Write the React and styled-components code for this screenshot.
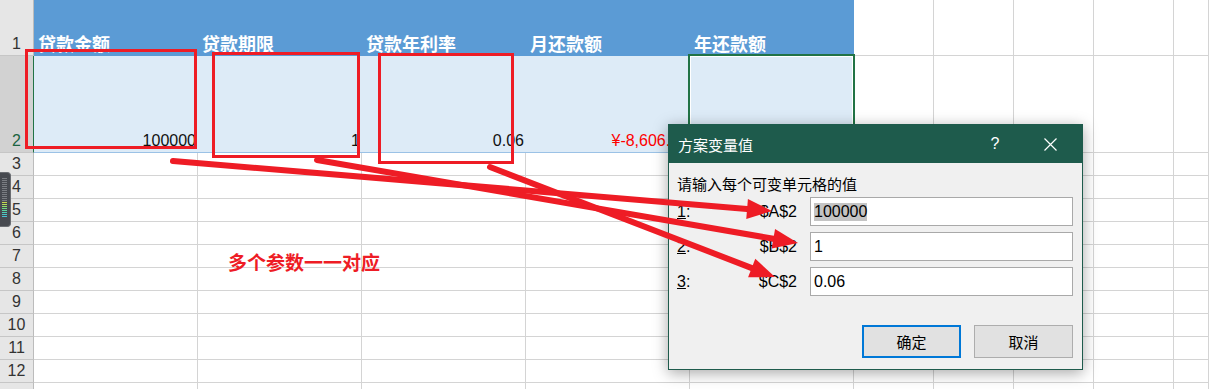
import React from 'react';
import styled, { createGlobalStyle } from 'styled-components';

const GlobalStyle = createGlobalStyle`
  html, body {
    margin: 0;
    padding: 0;
    background: #ffffff;
    overflow: hidden;
  }
`;

const CJK = `"Noto Sans CJK SC", "Noto Sans", sans-serif`;
const LATIN = `"Liberation Sans", "Noto Sans CJK SC", sans-serif`;
const RED = '#ee1c25';

const Page = styled.div`
  position: relative;
  width: 1209px;
  height: 389px;
  overflow: hidden;
  background: #ffffff;
`;

const Sheet = styled.div`
  display: grid;
  grid-template-columns: 34px repeat(5, 164px) repeat(4, 80px) 1fr;
  grid-template-rows: 56px 97px repeat(11, 23px);
`;

const RowHead = styled.div`
  box-sizing: border-box;
  display: flex;
  justify-content: center;
  align-items: ${({ $tall }) => ($tall ? 'flex-end' : 'center')};
  padding-bottom: ${({ $tall }) => ($tall ? '2px' : '0')};
  background: ${({ $selected }) => ($selected ? '#d2d2d2' : '#e6e6e6')};
  border-right: 1px solid ${({ $selected }) => ($selected ? '#217346' : '#bcbcbc')};
  border-bottom: 1px solid #c6c6c6;
  color: ${({ $selected }) => ($selected ? '#1b6441' : '#333333')};
  font-family: ${LATIN};
  font-size: 16px;
  line-height: 18px;
`;

const Cell = styled.div`
  box-sizing: border-box;
  border-right: 1px solid #d4d4d4;
  border-bottom: 1px solid #d4d4d4;
  background: #ffffff;
`;

const HeadCell = styled.div`
  box-sizing: border-box;
  display: flex;
  align-items: flex-end;
  padding: 0 0 1px 4px;
  background: #5b9bd5;
  border-bottom: 1px solid #5b9bd5;
  color: #ffffff;
  font-family: ${CJK};
  font-weight: 700;
  font-size: 18px;
  line-height: 22px;
  white-space: nowrap;
`;

const ValueCell = styled.div`
  box-sizing: border-box;
  display: flex;
  align-items: flex-end;
  justify-content: flex-end;
  padding: 0 2px 2px 0;
  background: #ddebf7;
  border-bottom: 1px solid #9bc2e6;
  color: ${({ $negative }) => ($negative ? '#ff0000' : '#111111')};
  font-family: ${LATIN};
  font-size: 16px;
  line-height: 18px;
  white-space: nowrap;
  overflow: hidden;
`;

const ActiveCell = styled.div`
  position: absolute;
  left: 688px;
  top: 54px;
  width: 167px;
  height: 100px;
  box-sizing: border-box;
  border: 2px solid #217346;
  box-shadow: inset 0 0 0 1px #ffffff;
`;

const Gadget = styled.div`
  position: absolute;
  left: 0;
  top: 172px;
  width: 11px;
  height: 55px;
  box-sizing: border-box;
  padding: 5px 0 5px 2px;
  background: #474a50;
  border: 1px solid #6a6d72;
  border-left: none;
  border-radius: 0 4px 4px 0;
  display: flex;
  flex-direction: column;
  gap: 1px;
`;

const Tick = styled.span`
  display: block;
  width: 5px;
  height: 1px;
  background: ${({ $on }) => $on || '#7a7d82'};
`;

const Note = styled.div`
  position: absolute;
  left: 228px;
  top: 251px;
  color: ${RED};
  font-family: ${CJK};
  font-weight: 700;
  font-size: 19px;
  line-height: 22px;
  white-space: nowrap;
`;

const Dialog = styled.div`
  position: absolute;
  left: 668px;
  top: 124px;
  width: 415px;
  height: 246px;
  box-sizing: border-box;
  border: 1px solid #1e5b4c;
  background: #f0f0f0;
  box-shadow: 0 3px 14px rgba(0, 0, 0, 0.35);
  display: flex;
  flex-direction: column;
`;

const TitleBar = styled.div`
  height: 38px;
  flex: none;
  display: flex;
  align-items: center;
  padding-left: 9px;
  background: #1e5b4c;
  color: #ffffff;
`;

const Title = styled.span`
  flex: 1;
  font-family: ${CJK};
  font-size: 15px;
`;

const TitleButton = styled.span`
  width: ${({ $w }) => $w}px;
  height: 38px;
  display: flex;
  align-items: center;
  justify-content: center;
  font-family: ${LATIN};
  font-size: 16px;
`;

const DialogBody = styled.div`
  flex: 1;
  display: flex;
  flex-direction: column;
  padding: 10px 9px 0 8px;
`;

const Prompt = styled.div`
  height: 24px;
  line-height: 22px;
  font-family: ${CJK};
  font-size: 15px;
  color: #000000;
`;

const Fields = styled.div`
  display: grid;
  grid-template-columns: 60px 73px 263px;
  grid-auto-rows: 29px;
  row-gap: 6px;
  align-items: center;
  font-family: ${LATIN};
  font-size: 16px;
  color: #000000;
`;

const FieldLabel = styled.span``;

const FieldRef = styled.span`
  text-align: right;
  padding-right: 13px;
`;

const Input = styled.div`
  box-sizing: border-box;
  height: 29px;
  display: flex;
  align-items: center;
  padding-left: 3px;
  background: #ffffff;
  border: 1px solid #a9a9a9;
`;

const Selected = styled.span`
  background: #c4c4c4;
`;

const Buttons = styled.div`
  display: flex;
  justify-content: flex-end;
  gap: 13px;
  margin-top: 29px;
`;

const Button = styled.div`
  box-sizing: border-box;
  width: 99px;
  height: 33px;
  display: flex;
  align-items: center;
  justify-content: center;
  background: #e1e1e1;
  border: ${({ $primary }) => ($primary ? '2px solid #0078d7' : '1px solid #adadad')};
  font-family: ${CJK};
  font-size: 15px;
  color: #000000;
`;

const Overlay = styled.svg`
  position: absolute;
  left: 0;
  top: 0;
  pointer-events: none;
`;

const headers = ['贷款金额', '贷款期限', '贷款年利率', '月还款额', '年还款额'];
const values = [
  { text: '100000' },
  { text: '1' },
  { text: '0.06' },
  { text: '¥-8,606.64', negative: true },
  { text: '' },
];
const fields = [
  { n: '1', ref: '$A$2', value: '100000', selected: true },
  { n: '2', ref: '$B$2', value: '1' },
  { n: '3', ref: '$C$2', value: '0.06' },
];
const boxes = [
  { x: 26.5, y: 50.5, w: 169, h: 97 },
  { x: 213.5, y: 53.5, w: 145, h: 103 },
  { x: 379.5, y: 54.5, w: 133, h: 108 },
];
const arrows = [
  [173, 161, 772, 211],
  [317, 160, 798, 243],
  [490, 167, 775, 277],
];

const Arrow = ({ x1, y1, x2, y2 }) => {
  const dx = x2 - x1;
  const dy = y2 - y1;
  const len = Math.hypot(dx, dy);
  const ux = dx / len;
  const uy = dy / len;
  const head = 25;
  const half = 10;
  const bx = x2 - ux * head;
  const by = y2 - uy * head;
  const points = [
    `${x2},${y2}`,
    `${bx - uy * half},${by + ux * half}`,
    `${bx + uy * half},${by - ux * half}`,
  ].join(' ');
  return (
    <g>
      <line x1={x1} y1={y1} x2={bx + ux * 3} y2={by + uy * 3} stroke={RED} strokeWidth="6" strokeLinecap="round" />
      <polygon points={points} fill={RED} />
    </g>
  );
};

const Annotations = () => (
  <Overlay width="1209" height="389" viewBox="0 0 1209 389">
    {boxes.map((b, i) => (
      <rect key={i} x={b.x} y={b.y} width={b.w} height={b.h} fill="none" stroke={RED} strokeWidth="3" />
    ))}
    {arrows.map(([x1, y1, x2, y2], i) => (
      <Arrow key={i} x1={x1} y1={y1} x2={x2} y2={y2} />
    ))}
  </Overlay>
);

const ticks = [
  '', '', '', '', '', '', '', '', '', '', '', '',
  '#c7d94a', '#b6e05a', '#8ee06a', '#6fdc86', '#5ad6a0', '#4fd0b8', '#4ac8c8', '#48c0d0',
];

const App = () => {
  const rows = [];
  for (let r = 1; r <= 13; r++) {
    rows.push(
      <RowHead key={`h${r}`} $tall={r <= 2} $selected={r === 2}>
        {r <= 12 ? r : ''}
      </RowHead>
    );
    for (let c = 0; c < 10; c++) {
      if (r === 1 && c < 5) {
        rows.push(<HeadCell key={`${r}-${c}`}>{headers[c]}</HeadCell>);
      } else if (r === 2 && c < 5) {
        rows.push(
          <ValueCell key={`${r}-${c}`} $negative={values[c].negative}>
            {values[c].text}
          </ValueCell>
        );
      } else {
        rows.push(<Cell key={`${r}-${c}`} />);
      }
    }
  }

  return (
    <Page>
      <GlobalStyle />
      <Sheet>{rows}</Sheet>
      <ActiveCell />
      <Gadget>
        {ticks.map((t, i) => (
          <Tick key={i} $on={t || undefined} />
        ))}
      </Gadget>
      <Note>多个参数一一对应</Note>
      <Dialog>
        <TitleBar>
          <Title>方案变量值</Title>
          <TitleButton $w={46}>?</TitleButton>
          <TitleButton $w={64}>
            <svg width="13" height="13" viewBox="0 0 13 13">
              <path d="M0.5 0.5 L12.5 12.5 M12.5 0.5 L0.5 12.5" stroke="#ffffff" strokeWidth="1.2" />
            </svg>
          </TitleButton>
        </TitleBar>
        <DialogBody>
          <Prompt>请输入每个可变单元格的值</Prompt>
          <Fields>
            {fields.map((f) => (
              <React.Fragment key={f.n}>
                <FieldLabel>
                  <u>{f.n}</u>:
                </FieldLabel>
                <FieldRef>{f.ref}</FieldRef>
                <Input>{f.selected ? <Selected>{f.value}</Selected> : f.value}</Input>
              </React.Fragment>
            ))}
          </Fields>
          <Buttons>
            <Button $primary>确定</Button>
            <Button>取消</Button>
          </Buttons>
        </DialogBody>
      </Dialog>
      <Annotations />
    </Page>
  );
};

export default App;
